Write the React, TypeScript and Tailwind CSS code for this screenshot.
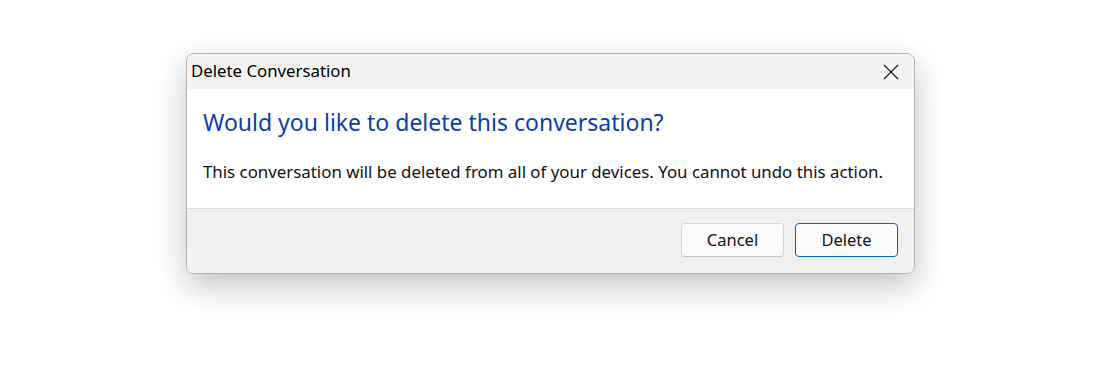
import React from "react";

export default function App() {
  return (
    <div
      className="w-[1101px] h-[369px] bg-white flex justify-center pt-[53px]"
      style={{ fontFamily: '"Noto Sans", "Segoe UI", sans-serif' }}
    >
      <div className="w-[729px] h-[221px] flex flex-col rounded-[8px] border border-[#b4b4b4] overflow-hidden shadow-[0_12px_32px_rgba(0,0,0,0.24)] bg-white">
        <div className="h-[35px] shrink-0 bg-[#f3f3f3] flex items-center justify-between pl-[4px] pr-[15px]">
          <span className="text-[16.8px] text-black leading-none">Delete Conversation</span>
          <svg width="16" height="16" viewBox="0 0 16 16" className="text-[#1a1a1a]">
            <path d="M1 1 L15 15 M15 1 L1 15" stroke="currentColor" strokeWidth="1.2" fill="none" />
          </svg>
        </div>
        <div className="h-[120px] shrink-0 bg-white px-[16px] pt-[18px] border-b border-[#dcdcdc]">
          <div className="text-[23px] leading-[30px] text-[#0a3fac]">Would you like to delete this conversation?</div>
          <div className="mt-[23px] text-[16.85px] leading-[24px] text-[#111]">
            This conversation will be deleted from all of your devices. You cannot undo this action.
          </div>
        </div>
        <div className="flex-1 bg-[#f0f0f0] flex items-start justify-end gap-[11px] pt-[14px] pr-[16px]">
          <button className="w-[103px] h-[34px] rounded-[4px] bg-[#fbfbfb] border border-[#d6d6d6] border-b-[#c4c4c4] text-[16.5px] text-[#111]">
            Cancel
          </button>
          <button className="w-[103px] h-[34px] rounded-[4px] bg-[#fbfbfb] border border-[#0067c0] text-[16.5px] text-[#111]">
            Delete
          </button>
        </div>
      </div>
    </div>
  );
}
